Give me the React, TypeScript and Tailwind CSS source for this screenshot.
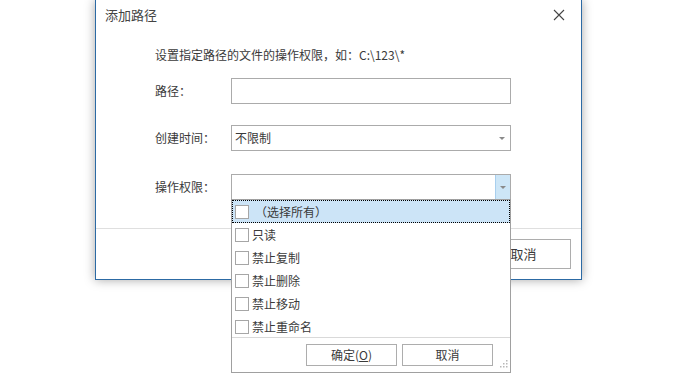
import React, { useState } from "react";

const font = "font-['Microsoft_YaHei','Noto_Sans_CJK_SC',sans-serif]";

const options = ["（选择所有）", "只读", "禁止复制", "禁止删除", "禁止移动", "禁止重命名"];

const Arrow = () => (
  <svg width="6" height="3" viewBox="0 0 6 3">
    <path d="M0 0h6L3 3z" fill="#8a8a8a" />
  </svg>
);

const App = () => {
  const [checked, setChecked] = useState<boolean[]>(options.map(() => false));

  const toggle = (i: number) => {
    setChecked((prev) => prev.map((c, j) => (j === i ? !c : c)));
  };

  return (
    <div className={`w-[677px] h-[374px] bg-white overflow-hidden text-[12px] text-[#3a3a3a] ${font}`}>
      <div className="ml-[95px] w-[487px] h-[280px] bg-white border-x border-b border-[#2c6aa4] shadow-[0_0_10px_rgba(0,0,0,0.35)] flex flex-col">
        {/* title bar */}
        <div className="h-[30px] flex items-center justify-between pl-[9px] pr-[16px]">
          <span className="text-[13px] text-[#444]">添加路径</span>
          <svg width="12" height="12" viewBox="0 0 12 12">
            <path d="M1 1l10 10M11 1L1 11" stroke="#444" strokeWidth="1.1" />
          </svg>
        </div>

        {/* body */}
        <div className="flex-1 pl-[59px] pt-[17px]">
          <div className="h-[16px] leading-[16px]">设置指定路径的文件的操作权限，如：C:\123\*</div>

          <div className="flex items-center mt-[15px]">
            <span className="w-[76px]">路径：</span>
            <input className="w-[280px] h-[26px] border border-[#ababab] outline-none px-[4px]" />
          </div>

          <div className="flex items-center mt-[21px]">
            <span className="w-[76px]">创建时间：</span>
            <div className="w-[280px] h-[26px] border border-[#ababab] flex items-center justify-between pl-[3px] pr-[5px]">
              <span>不限制</span>
              <Arrow />
            </div>
          </div>

          <div className="flex items-center mt-[23px]">
            <span className="w-[76px]">操作权限：</span>
            <div className="relative w-[280px] h-[26px] border border-[#ababab] flex justify-end">
              <div className="w-[15px] h-full bg-[#cde6f7] border-l border-[#a8cfee] flex items-center justify-center">
                <Arrow />
              </div>

              {/* dropdown popup */}
              <div className="absolute left-[-1px] top-[24px] w-[280px] h-[174px] bg-white border border-[#a0a0a0] z-10 flex flex-col">
                <div>
                  {options.map((o, i) => (
                    <div
                      key={o}
                      onClick={() => toggle(i)}
                      className={`h-[23px] flex items-center pl-[2px] ${
                        i === 0 ? "bg-[#cce4f7] border border-dotted border-black" : "border border-transparent"
                      }`}
                    >
                      <span className="w-[14px] h-[14px] border border-[#a6a6a6] bg-white mr-[3px] flex items-center justify-center text-[10px]">
                        {checked[i] ? "✓" : ""}
                      </span>
                      <span className={i === 0 ? "ml-[3px]" : ""}>{o}</span>
                    </div>
                  ))}
                </div>
                <div className="border-t border-[#d9d9d9] mt-[-1px] flex-1 flex items-center justify-end pr-[17px] gap-[5px] relative">
                  <button className="w-[91px] h-[22px] border border-[#adadad] bg-white">
                    确定(<span className="underline">O</span>)
                  </button>
                  <button className="w-[91px] h-[22px] border border-[#adadad] bg-white">取消</button>
                  <svg className="absolute right-[2px] bottom-[2px]" width="10" height="10" viewBox="0 0 10 10">
                    <g fill="#b8b8b8">
                      <rect x="8" y="0" width="1.5" height="1.5" />
                      <rect x="5" y="3" width="1.5" height="1.5" />
                      <rect x="8" y="3" width="1.5" height="1.5" />
                      <rect x="2" y="6" width="1.5" height="1.5" />
                      <rect x="5" y="6" width="1.5" height="1.5" />
                      <rect x="8" y="6" width="1.5" height="1.5" />
                    </g>
                  </svg>
                </div>
              </div>
            </div>
          </div>
        </div>

        {/* footer */}
        <div className="h-[51px] border-t border-[#dfdfdf] flex items-center justify-end gap-[8px] pr-[10px]">
          <button className="w-[95px] h-[30px] border border-[#adadad] bg-white text-[13px]">确定</button>
          <button className="w-[95px] h-[30px] border border-[#adadad] bg-white text-[13px]">取消</button>
        </div>
      </div>
    </div>
  );
};

export default App;
